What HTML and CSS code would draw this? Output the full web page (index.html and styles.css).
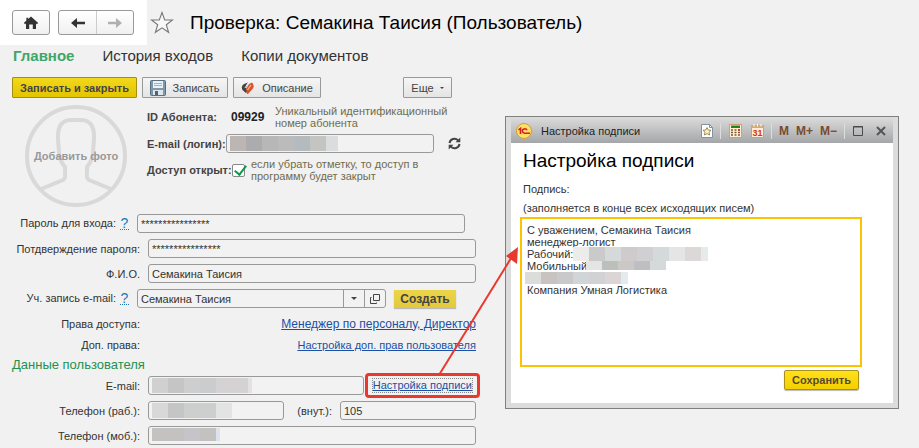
FILE: index.html
```
<!DOCTYPE html>
<html lang="ru">
<head>
    <meta charset="UTF-8">
    <meta name="viewport" content="width=device-width, initial-scale=1.0">
    <title>Семакина Таисия (Пользователь)</title>
    <link rel="stylesheet" href="styles.css">
</head>
<body>
    <header class="header">
        <div class="history">
            <button class="nav-btn" type="button" aria-label="Домой">
                <svg width="16" height="14" viewBox="0 0 16 14"><path d="M8 0.5 L15.2 7 L13.8 8.2 L13 7.5 V13 H9.8 V8.5 H6.2 V13 H3 V7.5 L2.2 8.2 L0.8 7 L3.4 4.6 V1.8 H5.2 V3 Z" fill="#333"/></svg>
            </button>
            <div class="nav-pair">
                <button type="button" aria-label="Назад">
                    <svg width="16" height="12" viewBox="0 0 16 12"><path d="M1 6 L7 1 V4.8 H15 V7.2 H7 V11 Z" fill="#333"/></svg>
                </button>
                <button type="button" aria-label="Вперед">
                    <svg width="16" height="12" viewBox="0 0 16 12"><path d="M15 6 L9 1 V4.8 H1 V7.2 H9 V11 Z" fill="#b0b0b0"/></svg>
                </button>
            </div>
        </div>
        <svg class="star" width="24" height="24" viewBox="0 0 24 24"><path d="M12 1.5 L14.7 9 H22.5 L16.3 13.7 L18.6 21.3 L12 16.8 L5.4 21.3 L7.7 13.7 L1.5 9 H9.3 Z" fill="#f8f8f8" stroke="#777" stroke-width="1.1"/></svg>
        <h1>Проверка: Семакина Таисия (Пользователь)</h1>
    </header>

    <nav class="tabs">
        <a class="active" href="#main">Главное</a>
        <a href="#history">История входов</a>
        <a href="#copies">Копии документов</a>
    </nav>

    <div class="toolbar">
        <button class="btn btn-primary" type="button">Записать и закрыть</button>
        <button class="btn btn-save" type="button">
            <svg width="16" height="16" viewBox="0 0 16 16"><rect x="0.5" y="0.5" width="15" height="15" rx="1" fill="#7d97ab" stroke="#587084"/><rect x="3" y="1" width="10" height="7" fill="#e9f1f5"/><path d="M4 3.5 H12 M4 5.5 H12" stroke="#9fb3c0"/><rect x="3" y="10" width="10" height="5" fill="#dfe6ea"/><rect x="5" y="11" width="3" height="4" fill="#4d6375"/></svg>
            Записать
        </button>
        <button class="btn btn-desc" type="button">
            <svg width="13" height="14" viewBox="0 0 13 14"><path d="M1.5 9 Q-0.5 5 3 3 L7 1.5 L5 7 L7 10 L5 12 Z" fill="#444"/><path d="M4 7 L7 2" stroke="#eee"/><path d="M6 13 L5 8 L8 3 L11 1.5 Q14 5 11.5 8 L7 13 Z" fill="#d9552c"/><path d="M6.5 9 L10 4" stroke="#f7b08e" stroke-width="1.3"/></svg>
            Описание
        </button>
        <button class="btn btn-more" type="button">Еще <span class="caret"></span></button>
    </div>

    <main class="content">
        <form class="user-form">
            <div class="profile">
                <button class="photo" type="button">
                    <svg viewBox="0 0 102 102"><g fill="none" stroke="#d9d9d9" stroke-width="4"><circle cx="51" cy="51" r="49"/><path d="M16 84 L38 75 Q41 73 40 68 V62 Q34 55 34 47 L33 34 Q32 15 46 15 H56 Q70 15 69 34 L68 47 Q68 55 62 62 V68 Q61 73 64 75 L86 84"/></g></svg>
                    <span>Добавить фото</span>
                </button>
                <div class="account">
                    <div class="account-row account-id">
                        <b>ID Абонента:</b>
                        <strong>09929</strong>
                        <span class="hint">Уникальный идентификационный номер абонента</span>
                    </div>
                    <div class="account-row account-login">
                        <label for="login">E-mail (логин):</label>
                        <div class="field field-login"><input id="login" type="text"><span class="mosaic mosaic-login"></span></div>
                        <button class="refresh" type="button" aria-label="Обновить">
                            <svg width="13" height="13" viewBox="0 0 13 13"><path d="M1.5 6 A5 5 0 0 1 10 3.2 M11.5 7 A5 5 0 0 1 3 9.8" fill="none" stroke="#444" stroke-width="2"/><path d="M12.3 0.5 V5.3 H7.5 Z M0.7 12.5 V7.7 H5.5 Z" fill="#444"/></svg>
                        </button>
                    </div>
                    <div class="account-row account-access">
                        <label for="access">Доступ открыт:</label>
                        <input class="check" id="access" type="checkbox" checked>
                        <span class="hint">если убрать отметку, то доступ в программу будет закрыт</span>
                    </div>
                </div>
            </div>

            <div class="row row-help">
                <div class="label"><label for="pass">Пароль для входа:</label><a class="help" href="#help">?</a></div>
                <div class="field"><input id="pass" type="text" value="****************"></div>
            </div>
            <div class="row">
                <label class="label" for="pass2">Потдверждение пароля:</label>
                <div class="field"><input id="pass2" type="text" value="****************"></div>
            </div>
            <div class="row">
                <label class="label" for="fio">Ф.И.О.</label>
                <div class="field"><input id="fio" type="text" value="Семакина Таисия"></div>
            </div>
            <div class="row row-help">
                <div class="label"><label for="mailbox">Уч. запись e-mail:</label><a class="help" href="#help">?</a></div>
                <div class="combo">
                    <input id="mailbox" type="text" value="Семакина Таисия">
                    <button type="button" aria-label="Выбрать"><span class="caret"></span></button>
                    <button type="button" aria-label="Открыть">
                        <svg width="10" height="10" viewBox="0 0 10 10"><path d="M3.5 0.5 H9.5 V6.5 H3.5 Z M1.5 3.5 H0.5 V9.5 H6.5 V8.5" fill="none" stroke="#444"/></svg>
                    </button>
                </div>
                <button class="create" type="button">Создать</button>
            </div>
            <div class="links">
                <div class="row row-link">
                    <span class="label">Права доступа:</span>
                    <a class="link-wide" href="#rights">Менеджер по персоналу, Директор</a>
                </div>
                <div class="row row-link">
                    <span class="label">Доп. права:</span>
                    <a href="#extra">Настройка доп. прав пользователя</a>
                </div>
            </div>

            <h2>Данные пользователя</h2>
            <div class="row">
                <label class="label" for="email">E-mail:</label>
                <div class="field"><input id="email" type="text"><span class="mosaic mosaic-email"></span></div>
                <div class="sign-link">
                    <a href="#sign">Настройка подписи</a>
                    <svg class="arrow" width="84" height="130" viewBox="0 0 84 130"><path d="M1 129 L75 9" stroke="#e8392e" stroke-width="2"/><path d="M80 1 L79 18 L68 10 Z" fill="#e8392e"/></svg>
                </div>
            </div>
            <div class="row">
                <label class="label" for="phone">Телефон (раб.):</label>
                <div class="field"><input id="phone" type="text"><span class="mosaic mosaic-phone"></span></div>
                <label class="ext-label" for="ext">(внут.):</label>
                <div class="field"><input id="ext" type="text" value="105"></div>
            </div>
            <div class="row">
                <label class="label" for="mobile">Телефон (моб.):</label>
                <div class="field"><input id="mobile" type="text"><span class="mosaic mosaic-mobile"></span></div>
            </div>
        </form>

        <section class="dialog">
            <div class="titlebar">
                <svg class="logo" width="16" height="16" viewBox="0 0 16 16"><circle cx="8" cy="8" r="7.5" fill="#fde066" stroke="#d99a3d"/><path d="M2.5 6.8 L4.5 5.4 V11" fill="none" stroke="#d71f1f" stroke-width="1.6"/><path d="M11 7.2 A2.4 2.2 0 1 0 9 10.2 H14" fill="none" stroke="#d71f1f" stroke-width="1.6"/></svg>
                <span class="dialog-title">Настройка подписи</span>
                <div class="tools">
                    <button class="tool-star" type="button" aria-label="Избранное"><svg width="12" height="14" viewBox="0 0 12 14"><path d="M0.5 0.5 H8.5 L11.5 3.5 V13.5 H0.5 Z" fill="#fff" stroke="#7e93a4"/><path d="M8.5 0.5 V3.5 H11.5" fill="none" stroke="#7e93a4"/><path d="M6 3.5 L7.2 6 L10 6.3 L8 8.2 L8.6 11 L6 9.6 L3.4 11 L4 8.2 L2 6.3 L4.8 6 Z" fill="#fff0c0" stroke="#8b7440" stroke-width="0.8"/></svg></button>
                    <button class="tool-calc" type="button" aria-label="Калькулятор"><svg width="13" height="14" viewBox="0 0 13 14"><rect x="0.5" y="0.5" width="12" height="13" fill="#fff0d2" stroke="#c9a376"/><rect x="2" y="1.5" width="9" height="2.5" fill="#218328"/><path d="M2 6 H11 M2 8.5 H11 M2 11 H11" stroke="#7b5538" stroke-width="1.5" stroke-dasharray="2 1.5"/><path d="M9 6 H11" stroke="#e22" stroke-width="1.5"/></svg></button>
                    <button class="tool-date" type="button" aria-label="Календарь"><svg width="13" height="14" viewBox="0 0 13 14"><rect x="0.5" y="1.5" width="12" height="12" fill="#fff0d2" stroke="#c9a376"/><rect x="0.5" y="1" width="12" height="3" fill="#d8aa72"/><path d="M3 0 V2.5 M6.5 0 V2.5 M10 0 V2.5" stroke="#fff"/><text class="date-num" x="6.5" y="12" text-anchor="middle">31</text></svg></button>
                    <button class="tool-m" type="button">M</button>
                    <button class="tool-m" type="button">M+</button>
                    <button class="tool-m" type="button">M−</button>
                    <button class="tool-max" type="button" aria-label="Развернуть"><svg width="10" height="10" viewBox="0 0 10 10"><path d="M0.5 0.5 H9.5 V9.5 H0.5 Z M0 1 H10" fill="none" stroke="#4a4a4a"/></svg></button>
                    <button class="tool-close" type="button" aria-label="Закрыть"><svg width="10" height="10" viewBox="0 0 10 10"><path d="M1 1 L9 9 M9 1 L1 9" stroke="#555" stroke-width="2"/></svg></button>
                </div>
            </div>
            <div class="dialog-body">
                <h3>Настройка подписи</h3>
                <label for="signature">Подпись:<br>(заполняется в конце всех исходящих писем)</label>
                <div class="signature">
                    <textarea id="signature" spellcheck="false">С уважением, Семакина Таисия
менеджер-логист
Рабочий:
Мобильный

Компания Умная Логистика</textarea>
                    <span class="mosaic mosaic-s1"></span>
                    <span class="mosaic mosaic-s2"></span>
                    <span class="mosaic mosaic-s3"></span>
                </div>
                <button class="submit" type="button">Сохранить</button>
            </div>
        </section>
    </main>
</body>
</html>
```
FILE: styles.css
```
* {
    box-sizing: border-box;
}
body {
    margin: 0;
    background: #f1f1f1;
    color: #333;
    font-family: "Liberation Sans", Arial, sans-serif;
    font-size: 11px;
    line-height: 12px;
}
button, input, textarea {
    font: inherit;
    color: inherit;
    margin: 0;
    padding: 0;
}
button {
    display: flex;
    align-items: center;
    justify-content: center;
    white-space: nowrap;
    border: none;
    background: none;
    cursor: pointer;
}
a {
    color: #1a50a5;
}
svg {
    display: block;
    flex: none;
}

/* header */
.header {
    display: flex;
    align-items: center;
    height: 45px;
}
.history {
    display: flex;
    align-items: center;
    gap: 8px;
    height: 45px;
    padding: 0 13px 0 12px;
    background: #fff;
}
.nav-btn, .nav-pair {
    height: 25px;
    border: 1px solid #999;
    border-radius: 3px;
    background: linear-gradient(#fff, #f0f0f0);
}
.nav-btn {
    width: 38px;
}
.nav-pair {
    display: flex;
}
.nav-pair button {
    width: 37px;
}
.nav-pair button + button {
    border-left: 1px solid #ccc;
}
.star {
    margin: 0 16px 0 3px;
}
h1 {
    margin: 0;
    color: #000;
    font-size: 19px;
    font-weight: normal;
    line-height: 24px;
    white-space: nowrap;
}
.tabs {
    display: flex;
    gap: 28px;
    padding: 1px 13px 0;
    font-size: 15px;
    line-height: 20px;
}
.tabs a {
    color: #333;
    text-decoration: none;
}
.tabs .active {
    color: #3fa66b;
    font-weight: bold;
}

/* toolbar */
.toolbar {
    display: flex;
    gap: 5px;
    padding: 11px 12px 7px;
}
.btn {
    height: 21px;
    border: 1px solid #999;
    border-radius: 1px;
    background: linear-gradient(#f6f6f6, #e4e4e4);
    color: #444;
}
.btn-primary {
    width: 125px;
    border-color: #a58f10;
    background: linear-gradient(#f2d81c, #e3c400);
    font-weight: bold;
}
.btn-save {
    gap: 6px;
    width: 86px;
}
.btn-desc {
    gap: 8px;
    width: 88px;
}
.btn-more {
    gap: 6px;
    width: 49px;
    margin-left: 77px;
}
.caret {
    border: 3px solid transparent;
    border-top-color: #444;
    border-bottom: none;
}
.btn-more .caret {
    border-width: 2px;
    border-bottom: none;
}

/* form */
.content {
    display: flex;
    align-items: flex-start;
    gap: 29px;
    padding: 0 20px 0 12px;
}
.user-form {
    flex: 0 1 464px;
    min-width: 0;
}
.profile {
    display: flex;
    gap: 20px;
    margin-bottom: 7px;
    padding-left: 13px;
}
.photo {
    position: relative;
    flex: none;
    width: 102px;
    height: 102px;
}
.photo svg {
    width: 100%;
}
.photo span {
    position: absolute;
    color: #999;
    font-weight: bold;
}
.account {
    flex: 1;
    color: #444;
}
.account-row {
    display: flex;
    align-items: center;
}
.account-row label, .account-row b {
    font-weight: bold;
    white-space: nowrap;
}
.account-id {
    height: 24px;
}
.account-id b {
    width: 84px;
}
.account-id strong {
    width: 44px;
    color: #222;
    font-size: 12px;
}
.account-id .hint {
    width: 190px;
}
.hint {
    color: #6f6c50;
}
.account-login {
    margin: 5px 0;
}
.account-login label {
    width: 79px;
}
.field-login input {
    border-color: #bbb;
}
.account-row .field-login {
    flex: 0 1 208px;
}
.refresh {
    margin-left: 14px;
}
.account-access label {
    width: 85px;
}
.account-access .hint {
    width: 170px;
}
.check {
    appearance: none;
    flex: none;
    width: 13px;
    height: 13px;
    margin-right: 6px;
    border: 1px solid #888;
    border-radius: 2px;
    background: #fff;
}
.check:checked::before {
    content: "";
    display: block;
    width: 5px;
    height: 10px;
    margin: -2px 0 0 4px;
    border: solid #0a9a4a;
    border-width: 0 2px 2px 0;
    transform: rotate(38deg);
}
.row {
    display: flex;
    align-items: center;
    gap: 8px;
    margin-bottom: 6px;
}
.label {
    display: flex;
    flex: none;
    justify-content: flex-end;
    gap: 4px;
    width: 128px;
    white-space: nowrap;
}
.row-help {
    padding-right: 11px;
}
.row-help .label {
    width: 117px;
}
.help {
    width: 9px;
    border-bottom: 1px dotted #1d78b8;
    color: #1d78b8;
    font-size: 14px;
    text-align: center;
    text-decoration: none;
}
.field {
    position: relative;
    flex: 1;
    min-width: 0;
}
.field input, .combo {
    width: 100%;
    height: 19px;
    border: 1px solid #999;
    border-radius: 3px;
    background: #f2f2f2;
}
.field input {
    display: block;
    padding: 0 3px;
}
.combo {
    display: flex;
    flex: 1;
    min-width: 0;
}
.combo input {
    flex: 1;
    min-width: 0;
    padding: 0 3px;
    border: none;
    background: none;
}
.combo button {
    width: 21px;
    border-left: 1px solid #999;
}
.create {
    width: 62px;
    height: 18px;
    margin-right: 9px;
    background: linear-gradient(#ecd44a, #e2c93c);
    box-shadow: 0 1px 1px #bbb;
    color: #444;
    font-size: 12px;
    font-weight: bold;
}
.links {
    padding-top: 2px;
}
.row-link {
    justify-content: space-between;
    height: 15px;
}
.link-wide {
    font-size: 12px;
}
h2 {
    margin: 0 0 4px;
    color: #1c9150;
    font-size: 13px;
    font-weight: normal;
    line-height: 14px;
}
.sign-link {
    position: relative;
    flex: none;
    margin: -4px -4px -4px -7px;
    padding: 3px 5px;
    border: 3px solid #e8392e;
    border-radius: 4px;
}
.sign-link a {
    display: block;
    line-height: 13px;
    outline: 1px dotted #888;
}
.arrow {
    position: absolute;
    bottom: 100%;
    left: 70px;
    z-index: 1;
    pointer-events: none;
}
.ext-label {
    width: 40px;
    text-align: right;
}

/* hidden values */
.mosaic {
    position: absolute;
    top: 2px;
    left: 4px;
    width: 80px;
    height: 15px;
}
.mosaic-login {
    width: 108px;
    background: linear-gradient(90deg, #bbb5b4 16px, #acacae 16px 32px, #b7b7b7 32px 48px, #bbb 48px 64px, #b4babd 64px 80px, #c4c4c2 80px 96px, #dadcdd 96px);
}
.mosaic-email {
    width: 100px;
    background: linear-gradient(90deg, #d0d0d0 16px, #c5c5c5 16px 32px, #cecece 32px 48px, #cacccd 48px 64px, #d4d2d2 64px 96px, #e2e2e2 96px);
}
.mosaic-phone {
    background: linear-gradient(90deg, #d8d8d8 16px, #c5c5c5 16px 32px, #cdcfce 32px 64px, #e3e3e3 64px);
}
.mosaic-mobile {
    width: 68px;
    height: 13px;
    background: linear-gradient(90deg, #c4c2c0 32px, #c5c5c9 32px 48px, #c4c2c0 48px 64px, #dde3ec 64px);
}
.mosaic-s1 {
    top: 30px;
    left: 53px;
    width: 135px;
    height: 14px;
    background: linear-gradient(90deg, #ececea 16px, #cacaca 16px 32px, #d5d9d9 32px 48px, #cfcacc 48px 64px, #d0cfd2 64px 80px, #d4dada 80px 96px, #e5e5e5 96px 112px, #dcd8d8 112px 128px, #e5eaec 128px);
}
.mosaic-s2 {
    top: 44px;
    left: 66px;
    height: 9px;
    background: linear-gradient(90deg, #e4e4e4 16px, #bcc0bd 16px 32px, #ccc8c6 32px 48px, #bebec3 48px 64px, #d6d9d9 64px);
}
.mosaic-s3 {
    top: 55px;
    left: 5px;
    width: 103px;
    height: 12px;
    background: linear-gradient(90deg, #dcdcdb 16px, #c8c3c1 16px 32px, #c9c9cb 32px 48px, #d1d5d8 48px 64px, #d2d2d4 64px 80px, #dbd5d5 80px 96px, #e5eaec 96px);
}

/* dialog */
.dialog {
    flex: 1;
    min-width: 0;
    margin-top: 11px;
    padding: 0 5px 5px;
    border: 1px solid #808080;
    background: #dcdcdc;
}
.titlebar {
    display: flex;
    align-items: center;
    height: 26px;
    padding: 2px 7px 0 5px;
    background: linear-gradient(#dcdcdc, #a5a6a9);
}
.dialog-title {
    margin-left: 9px;
    color: #222;
    white-space: nowrap;
}
.tools {
    display: flex;
    align-items: center;
    margin-left: auto;
}
.tools button {
    height: 16px;
}
.tool-star {
    padding-right: 7px;
}
.tools .tool-calc, .tools .tool-max {
    border-left: 1px solid #ddd;
    padding-left: 8px;
}
.tools .tool-date {
    margin-left: 9px;
    padding-right: 7px;
    border-right: 1px solid #ddd;
}
.date-num {
    fill: #d8321e;
    font-size: 9px;
    font-weight: bold;
}
.tools .tool-m {
    min-width: 10px;
    margin-right: 7px;
    color: #7a4b2c;
    font-size: 12px;
    font-weight: bold;
}
.tool-date + .tool-m {
    margin-left: 7px;
}
.tools .tool-close {
    margin-left: 13px;
}
.dialog-body {
    padding: 7px 31px 13px 9px;
    background: #fff;
}
h3 {
    margin: 0 3px 8px;
    color: #000;
    font-size: 19px;
    font-weight: normal;
    line-height: 22px;
}
.dialog-body label {
    display: block;
    margin: 0 3px;
    line-height: 19px;
}
.signature {
    position: relative;
    margin-top: -1px;
}
.signature textarea {
    display: block;
    width: 100%;
    height: 150px;
    padding: 5px;
    border: 2px solid #fcc400;
    outline: none;
    background: #fff;
    resize: none;
}
.submit {
    width: 75px;
    height: 20px;
    margin: 3px 3px 0 auto;
    border: 1px solid #a98f1c;
    border-radius: 2px;
    background: linear-gradient(#ffe01a, #f5d000);
    box-shadow: 0 1px 1px #bbb;
    color: #554a30;
    font-weight: bold;
}
```
